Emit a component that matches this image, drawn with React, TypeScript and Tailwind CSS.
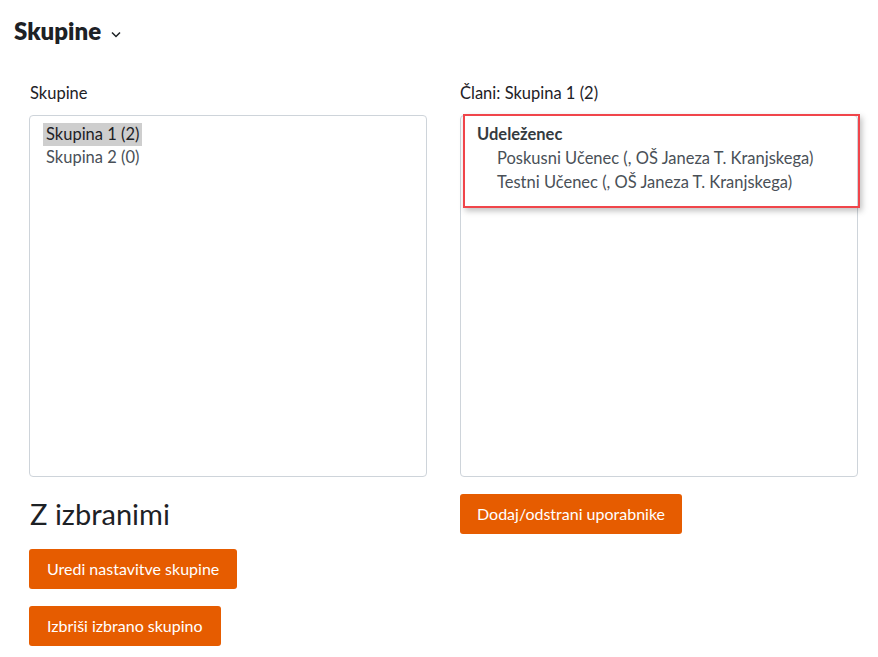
export default function App() {
  return (
    <div className="w-[878px] h-[657px] bg-white text-[#1d2125] font-['Lato','Noto_Sans',sans-serif] overflow-hidden">
      <div className="flex items-center gap-[10px] pl-[14px] pt-[17px]">
        <h2 className="text-[24px] leading-[28px] font-extrabold">Skupine</h2>
        <svg width="10" height="7" viewBox="0 0 10 7" className="mt-[6px]" fill="none" stroke="#1d2125" strokeWidth="1.5">
          <path d="M1 1.5 L5 5.5 L9 1.5" />
        </svg>
      </div>

      <div className="grid grid-cols-[398px_398px] gap-x-[33px] pl-[29px] pt-[36px]">
        <div className="flex flex-col">
          <label className="pl-[1px] text-[16.5px] leading-[24px]">Skupine</label>
          <div className="mt-[10px] h-[362px] border border-[#ced4da] rounded-[4px] pt-[7px] pl-[13px]">
            <div className="w-fit bg-[#cecece] px-[3px] text-[16.5px] leading-[23px] text-[#1d2125]">Skupina 1 (2)</div>
            <div className="w-fit px-[3px] text-[16.5px] leading-[23px] text-[#495057]">Skupina 2 (0)</div>
          </div>
          <h3 className="mt-[20px] pl-[1px] text-[29px] leading-[34px] font-normal">Z izbranimi</h3>
          <div className="mt-[18px] flex flex-col items-start gap-[17px]">
            <button className="h-[40px] px-[18px] bg-[#e65c00] text-white text-[16px] rounded-[3px]">Uredi nastavitve skupine</button>
            <button className="h-[40px] px-[18px] bg-[#e65c00] text-white text-[16px] rounded-[3px]">Izbriši izbrano skupino</button>
          </div>
        </div>

        <div className="flex flex-col">
          <label className="text-[16.5px] leading-[24px]">Člani: Skupina 1 (2)</label>
          <div className="relative mt-[10px] h-[362px] border border-[#ced4da] rounded-[4px] pt-[6px] pl-[16px] text-[16.5px] leading-[24px]">
            <div className="font-bold text-[#343a40]">Udeleženec</div>
            <div className="pl-[20px] text-[#495057]">Poskusni Učenec (, OŠ Janeza T. Kranjskega)</div>
            <div className="pl-[20px] text-[#495057]">Testni Učenec (, OŠ Janeza T. Kranjskega)</div>
            <div className="absolute left-[2px] top-[-2px] w-[397px] h-[94px] border-2 border-[#f0454a] shadow-[2px_3px_6px_rgba(0,0,0,0.25)]" />
          </div>
          <div className="mt-[17px]">
            <button className="h-[40px] px-[17px] bg-[#e65c00] text-white text-[16px] rounded-[3px]">Dodaj/odstrani uporabnike</button>
          </div>
        </div>
      </div>
    </div>
  );
}
